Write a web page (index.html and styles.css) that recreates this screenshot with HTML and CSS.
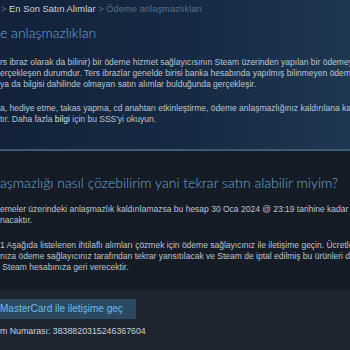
FILE: index.html
```html
<!DOCTYPE html>
<html lang="tr">
<head>
    <meta charset="UTF-8">
    <meta name="viewport" content="width=device-width, initial-scale=1.0">
    <title>Ödeme anlaşmazlıkları</title>
    <link rel="stylesheet" href="styles.css">
</head>
<body>
    <div class="hero">
        <div class="crumbs">
            <span class="sep">&gt;</span> <a href="#">En Son Satın Alımlar</a> <span class="sep">&gt;</span> <span class="current">Ödeme anlaşmazlıkları</span>
        </div>
        <h1 class="title">e anlaşmazlıkları</h1>
        <p class="text">
            rs ibraz olarak da bilinir) bir ödeme hizmet sağlayıcısının Steam üzerinden yapılan bir ödemeyi<br>
            erçekleşen durumdur. Ters ibrazlar genelde birisi banka hesabında yapılmış bilinmeyen ödemeler<br>
            ya da bilgisi dahilinde olmayan satın alımlar bulduğunda gerçekleşir.
        </p>
        <p class="text">
            a, hediye etme, takas yapma, cd anahtarı etkinleştirme, ödeme anlaşmazlığınız kaldırılana kadar<br>
            tır. Daha fazla <b>bilgi</b> için bu SSS'yi okuyun.
        </p>
    </div>

    <div class="section">
        <h2 class="subtitle">aşmazlığı nasıl çözebilirim yani tekrar satın alabilir miyim?</h2>
        <p class="text">
            emeler üzerindeki anlaşmazlık kaldırılamazsa bu hesap 30 Oca 2024 @ 23:19 tarihine kadar kalıcı<br>
            nacaktır.
        </p>
        <p class="text">
            1 Aşağıda listelenen ihtilaflı alımları çözmek için ödeme sağlayıcınız ile iletişime geçin. Ücretler<br>
            nıza ödeme sağlayıcınız tarafından tekrar yansıtılacak ve Steam de iptal edilmiş bu ürünleri de<br>
            &nbsp;Steam hesabınıza geri verecektir.
        </p>
    </div>

    <div class="contact">
        <a class="btn" href="#">MasterCard ile iletişime geç</a>
        <div class="ref">m Numarası: 3838820315246367604</div>
    </div>
</body>
</html>
```

FILE: styles.css
```css
body {
    margin: 0;
    height: 350px;
    overflow: hidden;
    background: #161c25;
    font-family: "Liberation Sans", Arial, sans-serif;
    color: #bcc6cf;
}
.hero {
    height: 149px;
    background: linear-gradient(90deg, #13223a 0%, #172a43 55%, #1e3753 100%);
    border-bottom: 2px solid #3d5b76;
}
.crumbs {
    line-height: 18px;
    font-size: 9.4px;
    color: #56708a;
    padding-left: 1px;
}
.crumbs a {
    color: #c6d4df;
    text-decoration: none;
}
.crumbs .current {
    color: #56708a;
}
.title {
    margin: 5px 0 0;
    font-family: Lato, sans-serif;
    font-weight: 300;
    font-size: 14px;
    line-height: 20px;
    color: #6caad8;
}
.text {
    margin: 13px 0 0;
    font-size: 8.5px;
    line-height: 11px;
    white-space: nowrap;
}
.text b {
    font-weight: normal;
    color: #d6e0e8;
}
.hero .title + .text {
    margin-top: 13.5px;
}
.section {
    padding: 20px 0 0;
    height: 119px;
}
.subtitle {
    margin: 0;
    font-family: Lato, sans-serif;
    font-weight: 300;
    font-size: 14px;
    line-height: 24px;
    color: #6caad8;
    white-space: nowrap;
}
.section .subtitle + .text {
    margin-top: 8.5px;
}
.section .text + .text {
    margin-top: 14px;
}
.contact {
    height: 60px;
    padding-top: 8px;
    background: #1e2530;
}
.btn {
    display: inline-block;
    margin-left: -12px;
    padding: 0 13px 0 12px;
    height: 20px;
    line-height: 20px;
    font-size: 10px;
    color: #6fbde8;
    background: #2b4a62;
    text-decoration: none;
}
.ref {
    margin-top: 5px;
    font-size: 8.8px;
    line-height: 14px;
    color: #c6d4df;
}
```
